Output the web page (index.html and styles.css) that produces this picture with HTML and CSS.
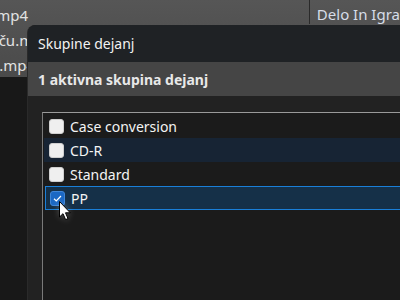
FILE: index.html
```html
<!DOCTYPE html>
<html lang="sl">
<head>
    <meta charset="UTF-8">
    <title>Skupine dejanj</title>
    <link rel="stylesheet" href="styles.css">
</head>
<body>
    <div class="app">
        <div class="files">
            <div class="header">
                <div class="header-col header-name"></div>
                <div class="header-col header-album">Delo In Igra</div>
            </div>
            <div class="file-row file-row-1"><span>Posnetek.mp4</span></div>
            <div class="file-row file-row-2"><span>Obisk pri Matiču.mp4</span></div>
            <div class="file-row file-row-3"><span>Intervju.mp4</span></div>
        </div>

        <div class="dialog">
            <div class="dialog-title">Skupine dejanj</div>
            <div class="dialog-band">1 aktivna skupina dejanj</div>
            <div class="dialog-body">
                <div class="list">
                    <label class="item"><span class="box"></span>Case conversion</label>
                    <label class="item item-hover"><span class="box"></span>CD-R</label>
                    <label class="item"><span class="box"></span>Standard</label>
                    <label class="item item-selected"><span class="box box-checked">
                        <svg width="15" height="15" viewBox="0 0 15 15"><path d="M4 7.8 L6.3 10 L11 5" fill="none" stroke="#fff" stroke-width="1.2"/></svg>
                    </span>PP</label>
                </div>
            </div>
        </div>

        <svg class="cursor" width="16" height="22" viewBox="0 0 16 22">
            <path d="M1.5 1.5 L1.5 17 L5 13.7 L7.6 19.6 L10 18.6 L7.5 12.8 L12.3 12.8 Z" fill="#fff" stroke="#000" stroke-width="1"/>
        </svg>
    </div>
</body>
</html>
```

FILE: styles.css
```css
body {
    margin: 0;
    padding: 0;
    background: #181818;
    font-family: 'Noto Sans', 'Open Sans', sans-serif;
    overflow: hidden;
}

.app {
    position: relative;
    width: 400px;
    height: 300px;
    overflow: hidden;
}

/* vrstice v ozadju */
.files {
    width: 400px;
    background: linear-gradient(180deg, #565656 0%, #4a4a4a 100%);
    height: 77px;
    color: #e2e2e2;
    font-size: 15px;
}

.header {
    display: flex;
    height: 24px;
}

.header-name {
    width: 314px;
    border-right: 1px solid #2a2a2a;
}

.header-album {
    padding: 2px 0 0 7px;
    line-height: 24px;
    color: #d6dde8;
    white-space: nowrap;
}

.file-row {
    display: flex;
    justify-content: flex-end;
    white-space: nowrap;
    height: 25px;
    line-height: 25px;
}

.file-row-1 {
    width: 28px;
    margin-top: -21px;
}

.file-row-2 {
    width: 51px;
}

.file-row-3 {
    width: 35px;
}

/* okno */
.dialog {
    position: absolute;
    left: 28px;
    top: 25px;
    width: 400px;
    height: 290px;
    background: #222;
    border-radius: 8px 0 0 0;
    overflow: hidden;
    box-shadow: -1px 0 0 #2a2a2a;
}

.dialog-title {
    height: 37px;
    line-height: 37px;
    padding-left: 10px;
    background: #1f2225;
    color: #f2f2f2;
    font-size: 14px;
}

.dialog-band {
    height: 34px;
    line-height: 36px;
    padding-left: 10px;
    background: #454545;
    color: #e8e8e8;
    font-size: 14px;
    font-weight: bold;
}

.dialog-body {
    padding: 16px 0 0 14px;
}

.list {
    height: 200px;
    background: #1b1b1b;
    border-top: 1px solid #9a9a9a;
    border-left: 1px solid #7a7a7a;
    padding: 1px 0 0 1px;
}

.item {
    display: flex;
    align-items: center;
    height: 24px;
    padding-left: 5px;
    color: #f4f4f4;
    font-size: 14px;
    box-sizing: border-box;
}

.item-hover {
    background: #172434;
}

.item-selected {
    background: #153048;
    border: 1px solid #1a7fd8;
    border-right: none;
    padding-left: 4px;
    margin-left: 1px;
}

.box {
    width: 15px;
    height: 15px;
    margin-right: 6px;
    border-radius: 3px;
    background: #efefef;
    box-sizing: border-box;
    border: 1px solid #cfcfcf;
    display: flex;
}

.box-checked {
    background: #1b68c4;
    border-color: #3f86d8;
}

.box-checked svg {
    margin: -1px;
}

.cursor {
    position: absolute;
    left: 58px;
    top: 200px;
    filter: drop-shadow(0 0 3px rgba(255, 255, 255, 0.25));
}
```
